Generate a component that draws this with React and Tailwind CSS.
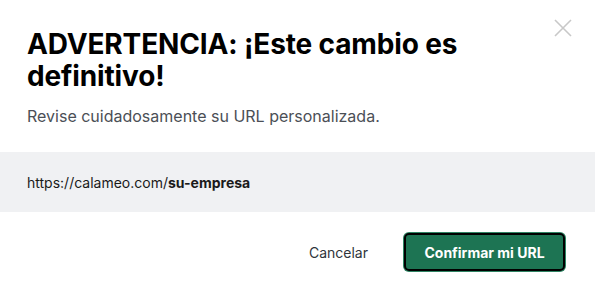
import React from 'react';

const App = () => {
  return (
    <div className="w-[595px] h-[294px] bg-white font-['Inter','Liberation_Sans',sans-serif] relative overflow-hidden">
      {/* Close button */}
      <button className="absolute right-[22px] top-[18px] text-[#c8c8c8]">
        <svg width="20" height="20" viewBox="0 0 20 20" fill="none" stroke="currentColor" strokeWidth="1.6">
          <path d="M2 2 L18 18 M18 2 L2 18" />
        </svg>
      </button>

      {/* Header */}
      <div className="px-[27px] pt-[28px]">
        <h1 className="text-[28px] leading-[32px] font-bold tracking-[-0.005em] text-black pr-[80px]">
          ADVERTENCIA: ¡Este cambio es definitivo!
        </h1>
        <p className="mt-[14px] text-[16px] leading-[20px] text-[#4b4f56]">
          Revise cuidadosamente su URL personalizada.
        </p>
      </div>

      {/* URL preview */}
      <div className="mt-[26px] h-[60px] bg-[#f0f1f3] flex items-center px-[27px]">
        <span className="text-[14px] text-[#1a1a1a]">
          https://calameo.com/<span className="font-bold">su-empresa</span>
        </span>
      </div>

      {/* Actions */}
      <div className="flex justify-end items-center gap-[36px] px-[30px] pt-[21px]">
        <button className="text-[14px] text-[#2f343b]">Cancelar</button>
        <button className="h-[38px] w-[161px] rounded-[5px] bg-[#1d7453] border-2 border-black ring-1 ring-[#2f8463] text-white text-[14px] font-bold">
          Confirmar mi URL
        </button>
      </div>
    </div>
  );
};

export default App;
